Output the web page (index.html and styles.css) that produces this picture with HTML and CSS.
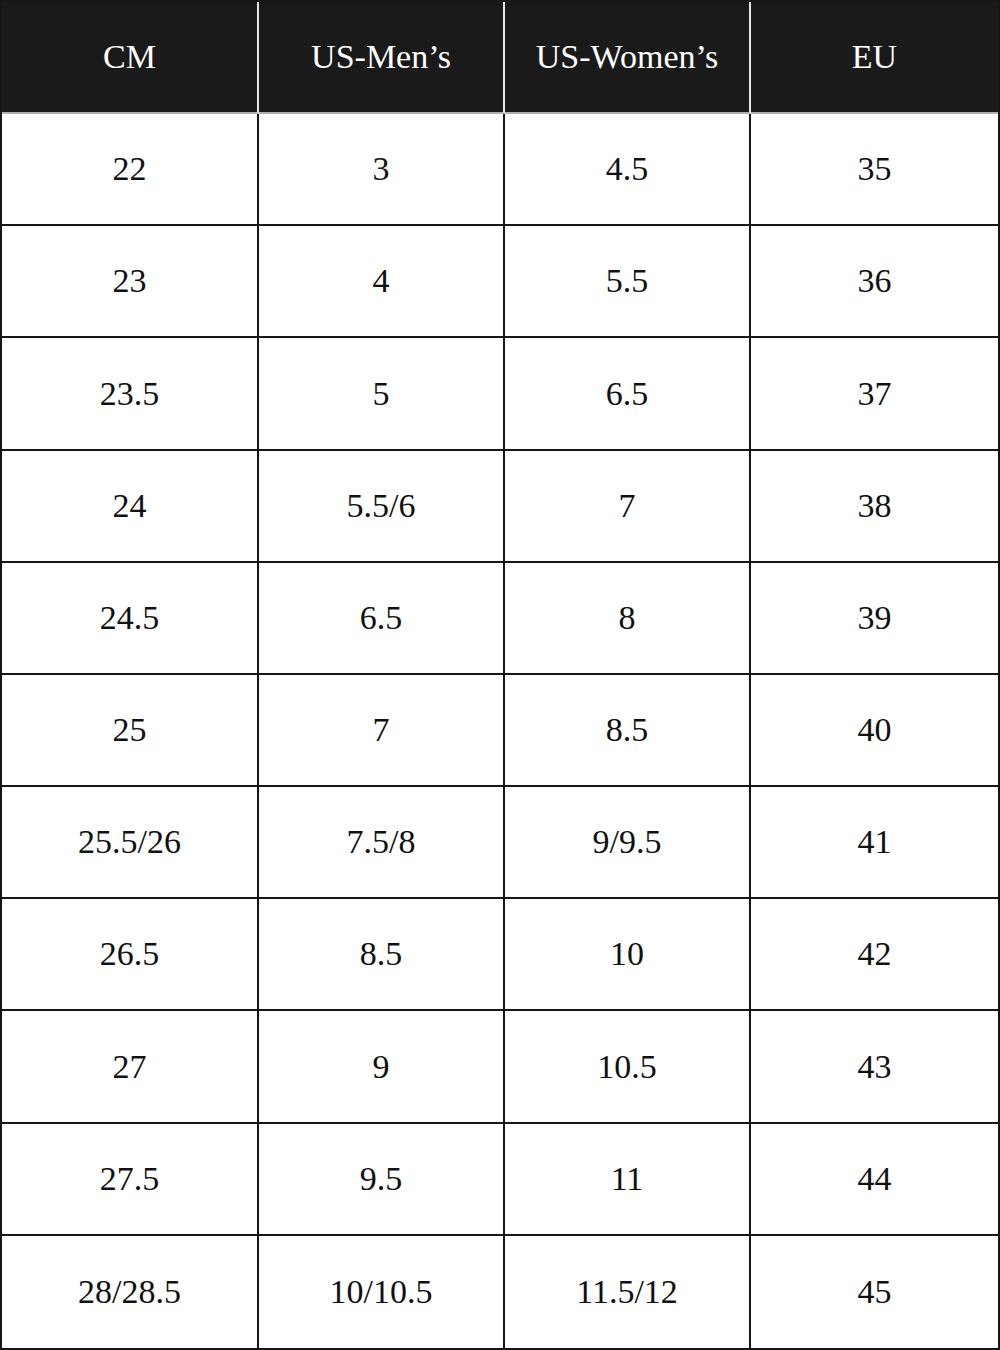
FILE: index.html
```html
<!DOCTYPE html>
<html>
<head>
<meta charset="utf-8">
<link rel="stylesheet" href="styles.css">
</head>
<body>
<div class="chart">
  <div class="cell head">CM</div>
  <div class="cell head">US-Men’s</div>
  <div class="cell head">US-Women’s</div>
  <div class="cell head">EU</div>

  <div class="cell">22</div><div class="cell">3</div><div class="cell">4.5</div><div class="cell">35</div>
  <div class="cell">23</div><div class="cell">4</div><div class="cell">5.5</div><div class="cell">36</div>
  <div class="cell">23.5</div><div class="cell">5</div><div class="cell">6.5</div><div class="cell">37</div>
  <div class="cell">24</div><div class="cell">5.5/6</div><div class="cell">7</div><div class="cell">38</div>
  <div class="cell">24.5</div><div class="cell">6.5</div><div class="cell">8</div><div class="cell">39</div>
  <div class="cell">25</div><div class="cell">7</div><div class="cell">8.5</div><div class="cell">40</div>
  <div class="cell">25.5/26</div><div class="cell">7.5/8</div><div class="cell">9/9.5</div><div class="cell">41</div>
  <div class="cell">26.5</div><div class="cell">8.5</div><div class="cell">10</div><div class="cell">42</div>
  <div class="cell">27</div><div class="cell">9</div><div class="cell">10.5</div><div class="cell">43</div>
  <div class="cell">27.5</div><div class="cell">9.5</div><div class="cell">11</div><div class="cell">44</div>
  <div class="cell last">28/28.5</div><div class="cell last">10/10.5</div><div class="cell last">11.5/12</div><div class="cell last">45</div>
</div>
</body>
</html>
```

FILE: styles.css
```css
html, body {
  margin: 0;
  padding: 0;
  background: #ffffff;
}

.chart {
  box-sizing: border-box;
  width: 1000px;
  height: 1350px;
  border: 2px solid #161616;
  display: grid;
  grid-template-columns: 257px 246px 246px 247px;
  grid-template-rows: repeat(12, 1fr);
  font-family: "Liberation Serif", "DejaVu Serif", serif;
  font-size: 34px;
  color: #111111;
}

.cell {
  box-sizing: border-box;
  display: flex;
  align-items: center;
  justify-content: center;
  border-right: 2px solid #161616;
  border-bottom: 2px solid #161616;
  background: #ffffff;
}

.cell:nth-child(4n) {
  border-right: none;
}

.cell.last {
  border-bottom: none;
}

.cell.head {
  background: #1a1a1a;
  color: #ffffff;
  border-right: 2px solid #e8e8e8;
  border-bottom: 2px solid #b0b0b0;
}

.cell.head:nth-child(4) {
  border-right: none;
}
```
